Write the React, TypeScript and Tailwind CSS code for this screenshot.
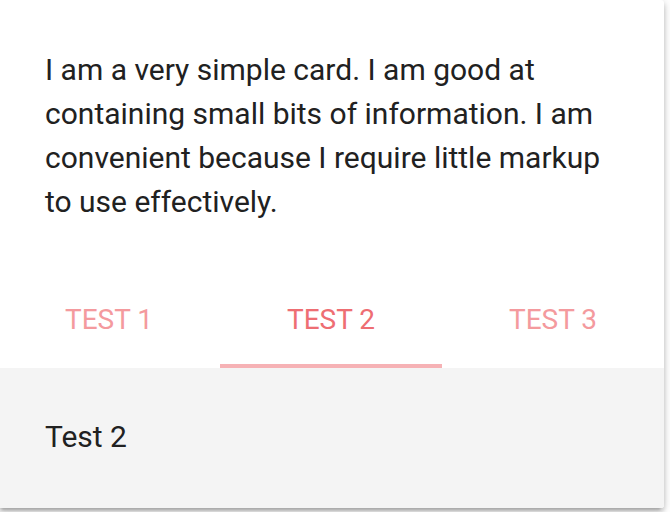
import React, { useState } from 'react';

const TABS = ['Test 1', 'Test 2', 'Test 3'];

export default function App() {
  const [active, setActive] = useState(1);

  return (
    <div className="min-h-screen bg-white font-['Roboto',sans-serif] overflow-hidden">
      {/* Card */}
      <div className="-ml-[2px] w-[666px] rounded-[3px] bg-white shadow-[0_4px_4px_0_rgba(0,0,0,0.14),0_6px_2px_-4px_rgba(0,0,0,0.12),0_2px_10px_0_rgba(0,0,0,0.2)] overflow-hidden">
        <div className="pl-[47px] pr-[46px] pt-[48px] pb-[48px]">
          <p className="text-[30px] leading-[44px] text-[#212121]">
            I am a very simple card. I am good at containing small bits of information. I am convenient because I require little markup to use effectively.
          </p>
        </div>

        {/* Tabs */}
        <div className="flex h-[96px] bg-white">
          {TABS.map((tab, i) => (
            <button
              key={tab}
              onClick={() => setActive(i)}
              className={`relative flex-1 flex items-center justify-center text-[28px] uppercase ${
                i === active ? 'text-[#ee6e73]' : 'text-[#f49a9e]'
              }`}
            >
              {tab}
              {i === active && (
                <span className="absolute left-0 right-0 bottom-0 h-[4px] bg-[#f6b2b5]" />
              )}
            </button>
          ))}
        </div>

        {/* Tab panel */}
        <div className="bg-[#f4f4f4] pl-[47px] pt-[47px] pb-[49px]">
          <p className="text-[30px] leading-[44px] text-[#212121]">{TABS[active]}</p>
        </div>
      </div>
    </div>
  );
}
